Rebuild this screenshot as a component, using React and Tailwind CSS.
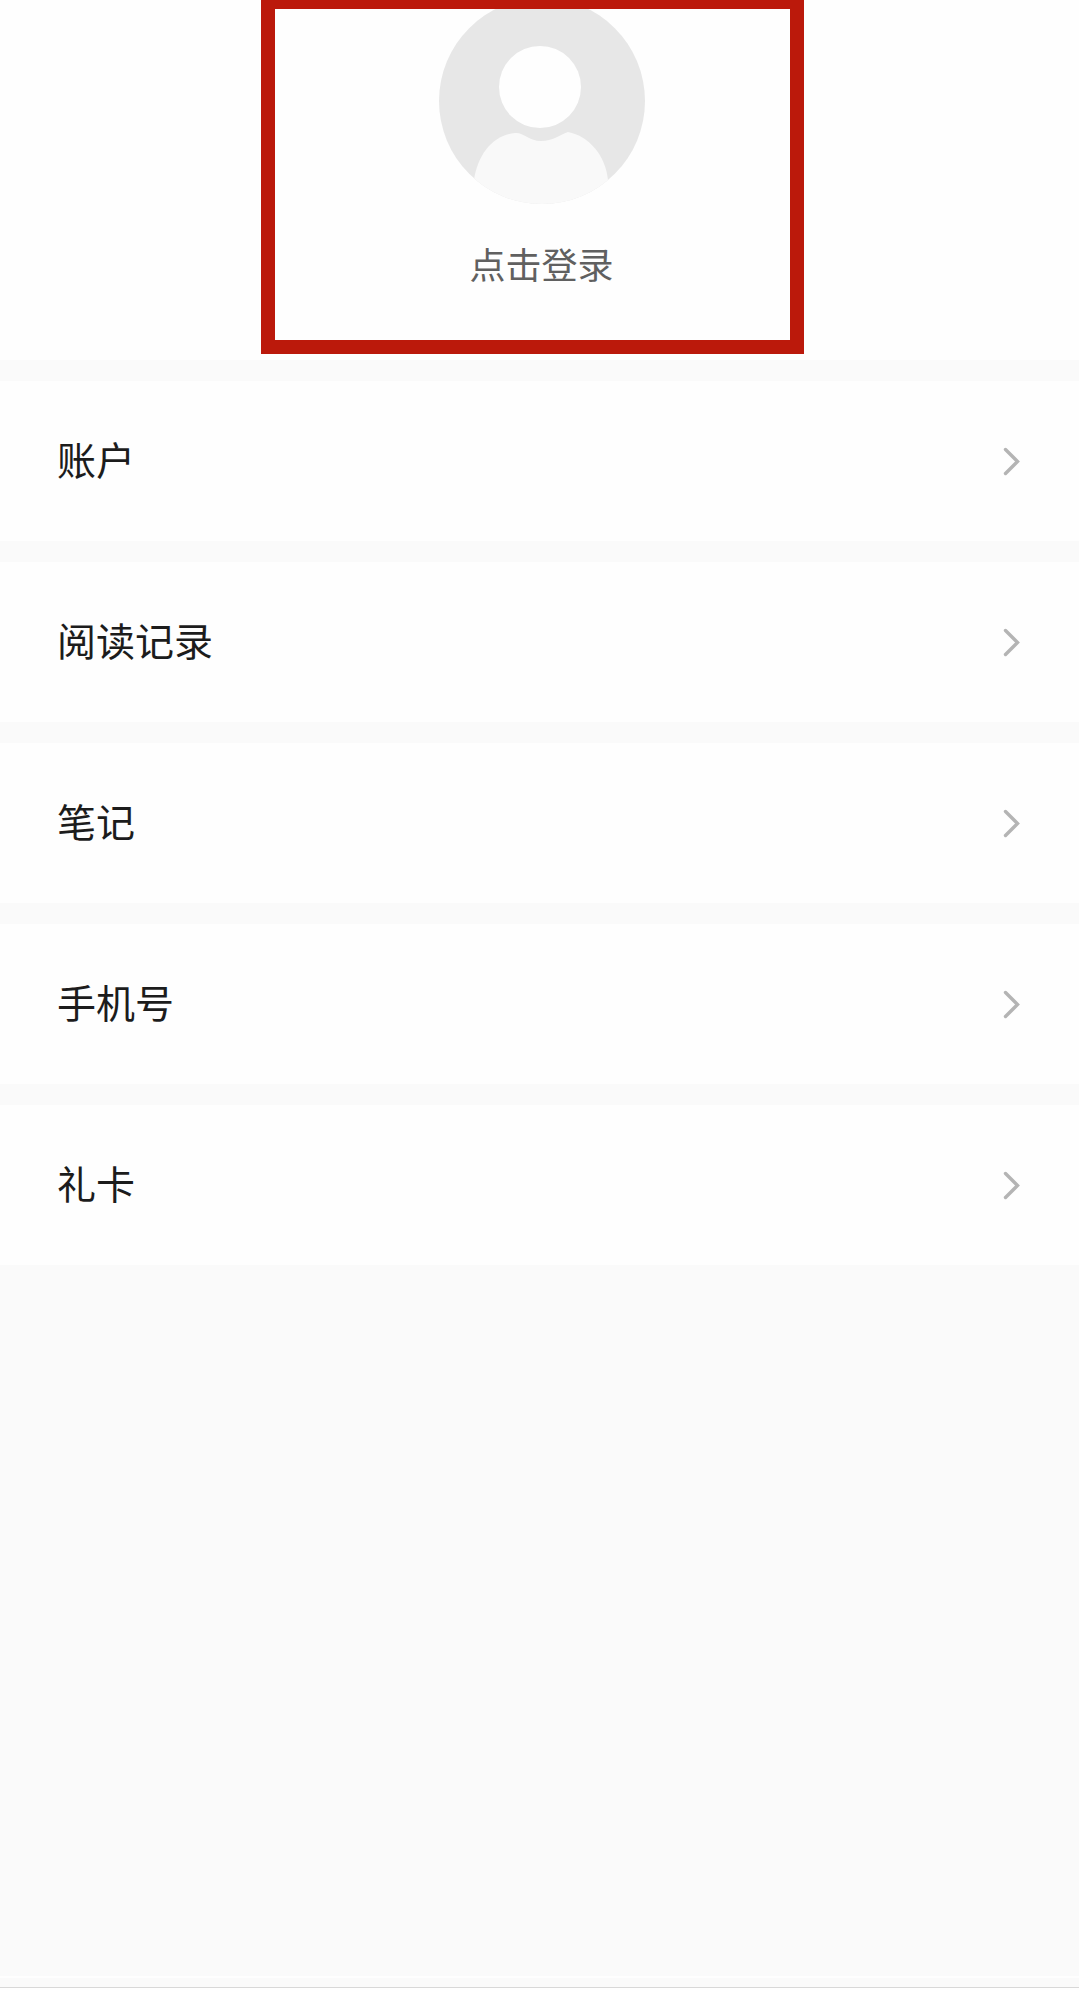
import React from 'react';

const menuItems = [
  { id: 'account', label: '账户' },
  { id: 'history', label: '阅读记录' },
  { id: 'notes', label: '笔记' },
  { id: 'phone', label: '手机号' },
  { id: 'giftcard', label: '礼卡' },
];

const Avatar = () => (
  <svg viewBox="0 0 206 206" className="-mt-0.5 w-[206px] h-[206px]" aria-hidden="true">
    <defs>
      <clipPath id="avatar-circle">
        <circle cx="103" cy="103" r="103" />
      </clipPath>
    </defs>
    <g clipPath="url(#avatar-circle)">
      <rect width="206" height="206" fill="#e7e7e7" />
      <circle cx="101" cy="89" r="41" fill="#fefefe" />
      <path
        d="M35 206V182C39 156 54 137 76 135C84 134 90 143 102 143C114 143 120 137 129 134C150 138 167 158 169 182V206Z"
        fill="#f9f9f9"
      />
    </g>
  </svg>
);

const Chevron = () => (
  <svg viewBox="0 0 18 30" className="w-[18px] h-[30px]" fill="none" aria-hidden="true">
    <path d="M3.5 3.5L15.5 15.5L3.5 27.5" stroke="#b4b4b4" strokeWidth="3.4" strokeLinecap="round" />
  </svg>
);

const MenuRow = ({ id, label }) => (
  <li>
    <a href={`#${id}`} className="flex h-40 items-center justify-between bg-[#fefefe] pl-[57px] pr-[59px]">
      <span className="pb-[6px] text-[39px] leading-[56px] text-[#1c1c1c]">{label}</span>
      <Chevron />
    </a>
  </li>
);

const App = () => {
  return (
    <div className="flex min-h-screen flex-col bg-[#fafafa] font-['Noto_Sans_CJK_SC',sans-serif]">
      {/* Profile */}
      <header className="relative flex h-[360px] justify-center bg-[#fefefe] pl-1">
        <button type="button" className="flex flex-col items-center self-start">
          <Avatar />
          <span className="mt-8 text-[36px] leading-[54px] text-[#606060]">点击登录</span>
        </button>
        {/* Highlight around the login area */}
        <div className="pointer-events-none absolute top-0 left-[24.2%] right-[25.5%] h-[354px] border-[14px] border-t-[9px] border-[#bb190b]" />
      </header>

      {/* Menu */}
      <nav className="mt-[21px]">
        <ul className="flex flex-col gap-[21px]">
          {menuItems.map((item) => (
            <MenuRow key={item.id} id={item.id} label={item.label} />
          ))}
        </ul>
      </nav>

      {/* Bottom edge */}
      <footer className="mt-auto border-b-2 border-[#fefefe]">
        <div className="h-[12px] border-t-2 border-b border-t-[#fefefe] border-b-[#d8d8d8]" />
      </footer>
    </div>
  );
};

export default App;
